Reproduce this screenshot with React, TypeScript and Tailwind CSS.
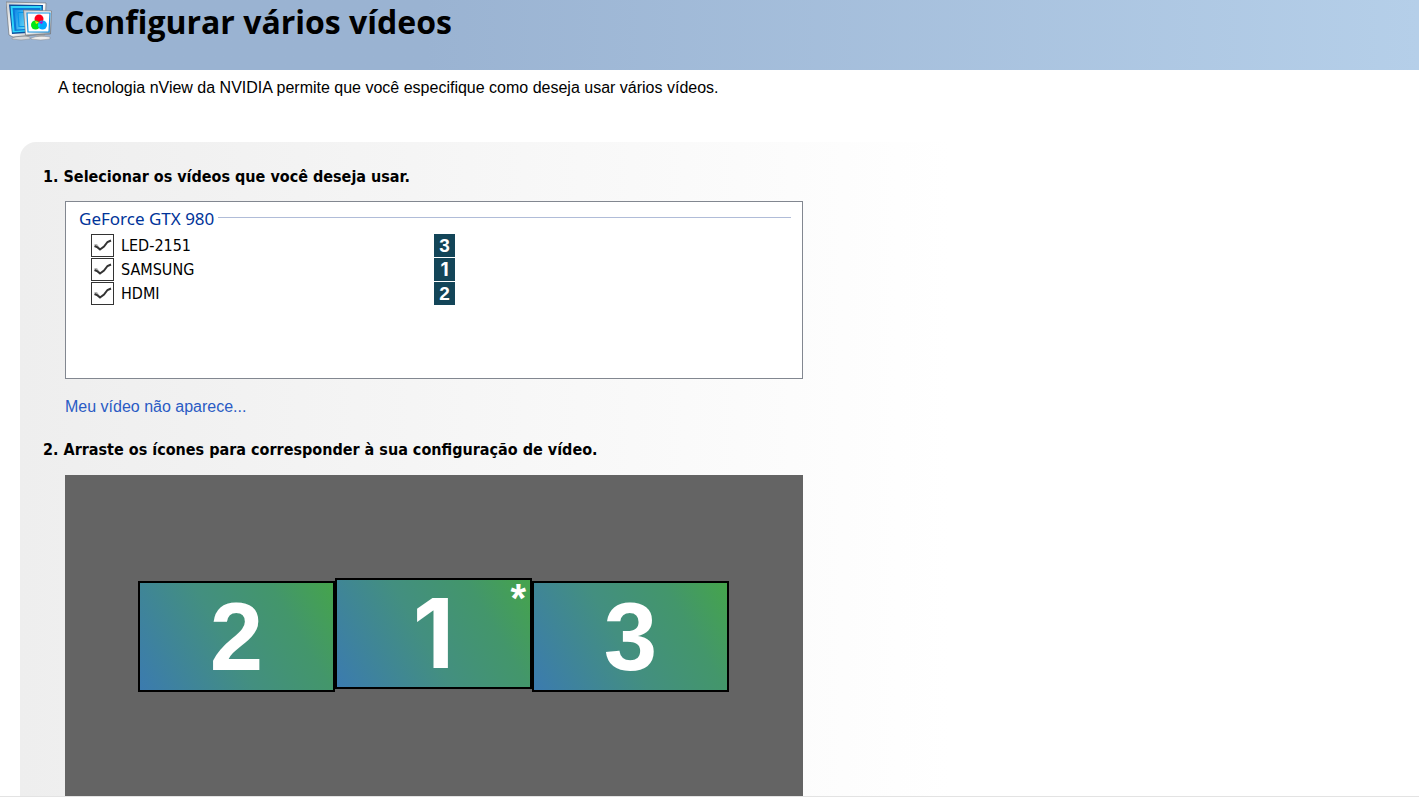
import { useState } from 'react'
import { cx } from 'class-variance-authority'

interface Display {
  id: number
  name: string
}

interface Placement {
  id: number
  position: string
  primary?: boolean
}

const displays: Display[] = [
  { id: 3, name: 'LED-2151' },
  { id: 1, name: 'SAMSUNG' },
  { id: 2, name: 'HDMI' }
]

const placements: Placement[] = [
  { id: 2, position: 'left-[73px] top-[106px]' },
  { id: 1, position: 'left-[270px] top-[103px]', primary: true },
  { id: 3, position: 'left-[467px] top-[106px]' }
]

// Inter has a plain "1" without a foot
const digitFont = (id: number) =>
  id === 1 ? "font-['Inter',sans-serif]" : "font-['Liberation_Sans',sans-serif]"

function DisplaysIcon() {
  return (
    <svg viewBox="0 0 48 42" className="h-[42px] w-12 shrink-0" aria-hidden="true">
      <defs>
        <linearGradient id="bezel" x1="0" y1="0" x2="1" y2="1">
          <stop offset="0" stopColor="#c8ccd0" />
          <stop offset="0.5" stopColor="#ffffff" />
          <stop offset="1" stopColor="#8e9398" />
        </linearGradient>
        <linearGradient id="screen" x1="0" y1="0" x2="1" y2="0.3">
          <stop offset="0" stopColor="#0f8ae6" />
          <stop offset="1" stopColor="#8ffcff" />
        </linearGradient>
      </defs>
      {/* back monitor */}
      <path d="M14 33h9v4h-9z" fill="#9a9ea2" />
      <path d="M6 38q8-4 18-1v2q-9 2-18 0z" fill="#d6d8da" stroke="#84898e" strokeWidth="0.5" />
      <path d="M0 2l40 1-1 31-32 3-4-2z" fill="url(#bezel)" stroke="#71767b" strokeWidth="0.7" />
      <path d="M3 4.5l34 0.5-1 27-30 2z" fill="#0b4f9e" />
      <path d="M4.500 6h31v24.500l-29 2z" fill="#2fd4f8" />
      <path d="M6.500 8h28v21l-26 2z" fill="#0c78d8" />
      <path d="M8.500 10h25v18l-23 1.500z" fill="url(#screen)" />
      <path d="M12 12.500h22M12 12.500l1 14h8" fill="none" stroke="#0796ea" strokeWidth="1.2" />
      {/* front monitor */}
      <path d="M31 33h7l1 4h-9z" fill="#a5a9ad" />
      <path d="M25 38q8-3 19-1v2q-9 2-19 0z" fill="#eeeeee" stroke="#84898e" strokeWidth="0.5" />
      <path d="M17.500 10l28 1-1 23-25 1z" fill="url(#bezel)" stroke="#71767b" strokeWidth="0.7" />
      <path d="M21 13h23l-1 19H22z" fill="#ffffff" stroke="#1593e4" strokeWidth="1.2" />
      <circle cx="33" cy="19" r="4.5" fill="#ff0018" />
      <circle cx="29.5" cy="25" r="4.5" fill="#00e818" />
      <circle cx="36.5" cy="25" r="4.5" fill="#00a8ff" />
      <path d="M33 22.500l-4-1.500 1 3z" fill="#f8e800" />
      <path d="M33 22.500l4-1.500-1 3z" fill="#c000c8" />
      <path d="M33 22.500l1 3-1 2-1-2z" fill="#00e8e8" />
    </svg>
  )
}

function DisplayRow({ display }: { display: Display }) {
  const [enabled, setEnabled] = useState(true)
  const inputId = `display-${display.id}`

  return (
    <li className="grid h-6 grid-cols-2 items-start">
      <div className="flex items-start gap-[7px] pl-[25px]">
        <span className="relative h-[23px] w-[23px]">
          <input
            id={inputId}
            type="checkbox"
            checked={enabled}
            onChange={e => setEnabled(e.target.checked)}
            className="block h-[23px] w-[23px] appearance-none border border-[#333333] bg-white"
          />
          {enabled && (
            <svg viewBox="0 0 23 23" className="pointer-events-none absolute inset-0" aria-hidden="true">
              <path d="M3 10h3l3 4-1 1.500z" fill="#b5b5b5" />
              <path d="M3.500 12l2.500 1 3 2.500 4-3 3.500-4.500 3.500-1.500" fill="none" stroke="#333333" strokeWidth="2" />
            </svg>
          )}
        </span>
        <label htmlFor={inputId} className="leading-6">
          {display.name}
        </label>
      </div>
      <span
        className={cx(
          'h-[23px] w-[21px] bg-[#134558] text-center text-[19px] leading-[23px] font-bold text-white',
          digitFont(display.id)
        )}
      >
        {display.id}
      </span>
    </li>
  )
}

function Monitor({ id, position, primary }: Placement) {
  return (
    <button
      type="button"
      className={cx(
        'absolute h-[111px] w-[197px] cursor-move border-2 border-black bg-linear-[60deg,#3b7baf,#438f80_45%,#43966b_75%,#45a44c] text-center text-8xl leading-[107px] font-bold text-white',
        digitFont(id),
        position
      )}
    >
      {id}
      {primary && (
        <span className="absolute top-0 right-1 font-['Liberation_Sans',sans-serif] text-[40px] leading-9">*</span>
      )}
    </button>
  )
}

export default function App() {
  return (
    <div className="flex min-h-screen flex-col border-b border-[#e3e3e3] bg-white font-['Liberation_Sans',sans-serif] text-base text-black">
      <header className="flex h-[70px] items-start gap-[10px] bg-linear-to-r from-[#9ab3d2] from-30% to-[#b5cfe9] pl-[6px]">
        <DisplaysIcon />
        <h1 className="font-['Open_Sans',sans-serif] text-[32px] leading-[44px] font-bold">Configurar vários vídeos</h1>
      </header>

      <p className="px-[58px] pt-2 leading-5">
        A tecnologia nView da NVIDIA permite que você especifique como deseja usar vários vídeos.
      </p>

      <main className="mt-[44px] ml-5 flex grow flex-col rounded-tl-2xl bg-linear-[90deg,#eeeeee,#f8f8f8_560px,#ffffff_930px] pl-[23px]">
        <h2 className="mt-[22px] font-['DejaVu_Sans_Condensed',sans-serif] leading-[26px] font-bold">
          1. Selecionar os vídeos que você deseja usar.
        </h2>
        <section className="mt-[11px] ml-[22px] h-[178px] max-w-[738px] border border-[#828790] bg-white font-['DejaVu_Sans_Condensed',sans-serif]">
          <div className="mt-[5px] mr-[11px] ml-[13px] flex items-start gap-1">
            <h3 className="font-['Noto_Sans',sans-serif] text-[17px] leading-6 text-[#003399]">GeForce GTX 980</h3>
            <hr className="mt-[10px] grow border-[#b0bcd8]" />
          </div>
          <ul className="mt-[3px]">
            {displays.map(display => (
              <DisplayRow key={display.id} display={display} />
            ))}
          </ul>
        </section>
        <a href="#ajuda" className="mt-[18px] ml-[22px] self-start leading-5 text-[#2a5bc4]">
          Meu vídeo não aparece...
        </a>

        <h2 className="mt-5 font-['DejaVu_Sans_Condensed',sans-serif] leading-[26px] font-bold">
          2. Arraste os ícones para corresponder à sua configuração de vídeo.
        </h2>
        <section className="relative mt-3 ml-[22px] min-h-80 max-w-[738px] grow bg-[#646464]">
          {placements.map(placement => (
            <Monitor key={placement.id} {...placement} />
          ))}
        </section>
      </main>
    </div>
  )
}
